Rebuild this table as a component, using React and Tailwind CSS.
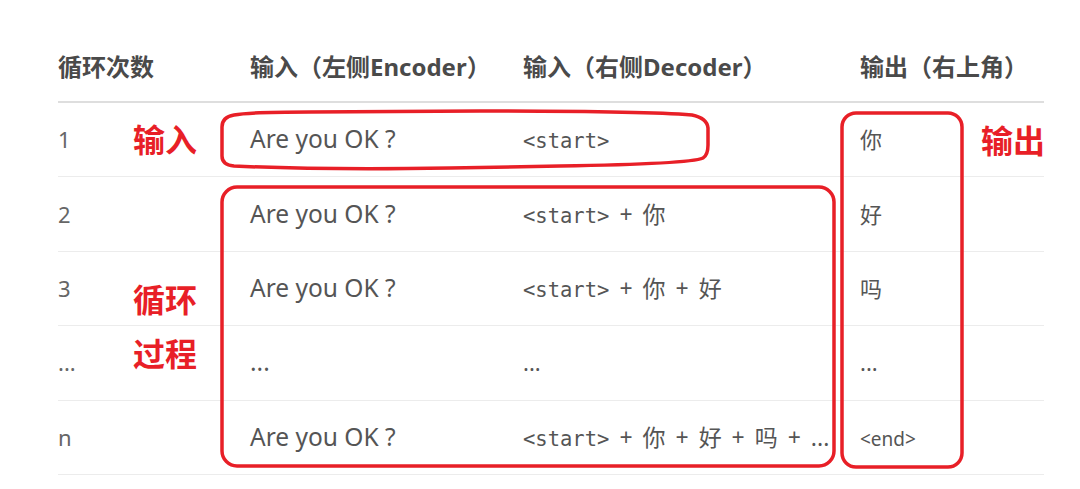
const cjk = "font-['Noto_Sans','Noto_Sans_CJK_SC',sans-serif]";
const mono = "font-['DejaVu_Sans_Mono','Noto_Sans_CJK_SC',monospace]";

const rows = [
  { n: "1", enc: "Are you OK ?", dec: "<start>", out: "你" },
  { n: "2", enc: "Are you OK ?", dec: "<start> + 你", out: "好" },
  { n: "3", enc: "Are you OK ?", dec: "<start> + 你 + 好", out: "吗" },
  { n: "...", enc: "...", dec: "...", out: "..." },
  { n: "n", enc: "Are you OK ?", dec: "<start> + 你 + 好 + 吗 + ...", out: "<end>", monoOut: true },
];

function Mono({ text }) {
  // ascii tags in mono, the rest (spaces, +, CJK) in sans
  const parts = text.split(/(<start>)/);
  return (
    <>
      {parts.map((p, i) =>
        p === "<start>" ? (
          <span key={i} className={`${mono} text-[20.5px]`}>{p}</span>
        ) : (
          <span key={i} className={`${cjk} text-[23px] whitespace-pre [word-spacing:4px]`}>{p}</span>
        )
      )}
    </>
  );
}

export default function App() {
  return (
    <div className={`relative w-[1080px] h-[489px] overflow-hidden bg-white ${cjk} text-[#555]`}>
      <div className="pt-[32px] pl-[58px] w-[1044px]">
        <div className="grid grid-cols-[192px_273px_337px_184px] h-[71px] items-center border-b-2 border-[#dedede] text-[24px] font-bold text-[#4a4a4a]">
          <div>循环次数</div>
          <div>输入（左侧Encoder）</div>
          <div>输入（右侧Decoder）</div>
          <div>输出（右上角）</div>
        </div>
        {rows.map((r, i) => (
          <div
            key={i}
            className="grid grid-cols-[192px_273px_337px_184px] h-[74.4px] items-center border-b border-[#ececec] text-[22px]"
          >
            <div className="text-[#666]">{r.n}</div>
            <div className="text-[24.5px]">{r.enc}</div>
            <div className="whitespace-nowrap">
              {r.dec === "..." ? r.dec : <Mono text={r.dec} />}
            </div>
            <div>
              {r.monoOut ? <span className="text-[19px]">{r.out}</span> : r.out}
            </div>
          </div>
        ))}
      </div>

      <svg className="absolute left-0 top-0 pointer-events-none" width="1080" height="489" fill="none" stroke="#e81f27" strokeWidth="3.5">
        <path d="M 234 115 Q 222 117 222 127 L 222 156 Q 222 165 234 166 Q 320 170 450 168 L 560 166 Q 690 164 703 158 Q 708 155 708 145 L 708 128 Q 707 118 692 115 Q 640 111 480 111 L 310 112 Q 250 112 234 115 Z" />
        <rect x="222" y="187" width="612" height="279" rx="15" />
        <rect x="842" y="113" width="120" height="354" rx="14" />
      </svg>

      <div className="absolute left-[133px] top-[124px] text-[32px] font-bold leading-none text-[#e81f27] pointer-events-none">输入</div>
      <div className="absolute left-[981px] top-[125px] text-[32px] font-bold leading-none text-[#e81f27] pointer-events-none">输出</div>
      <div className="absolute left-[133px] top-[273px] text-[32px] font-bold leading-[54px] text-[#e81f27] pointer-events-none">
        <div>循环</div>
        <div>过程</div>
      </div>
    </div>
  );
}
